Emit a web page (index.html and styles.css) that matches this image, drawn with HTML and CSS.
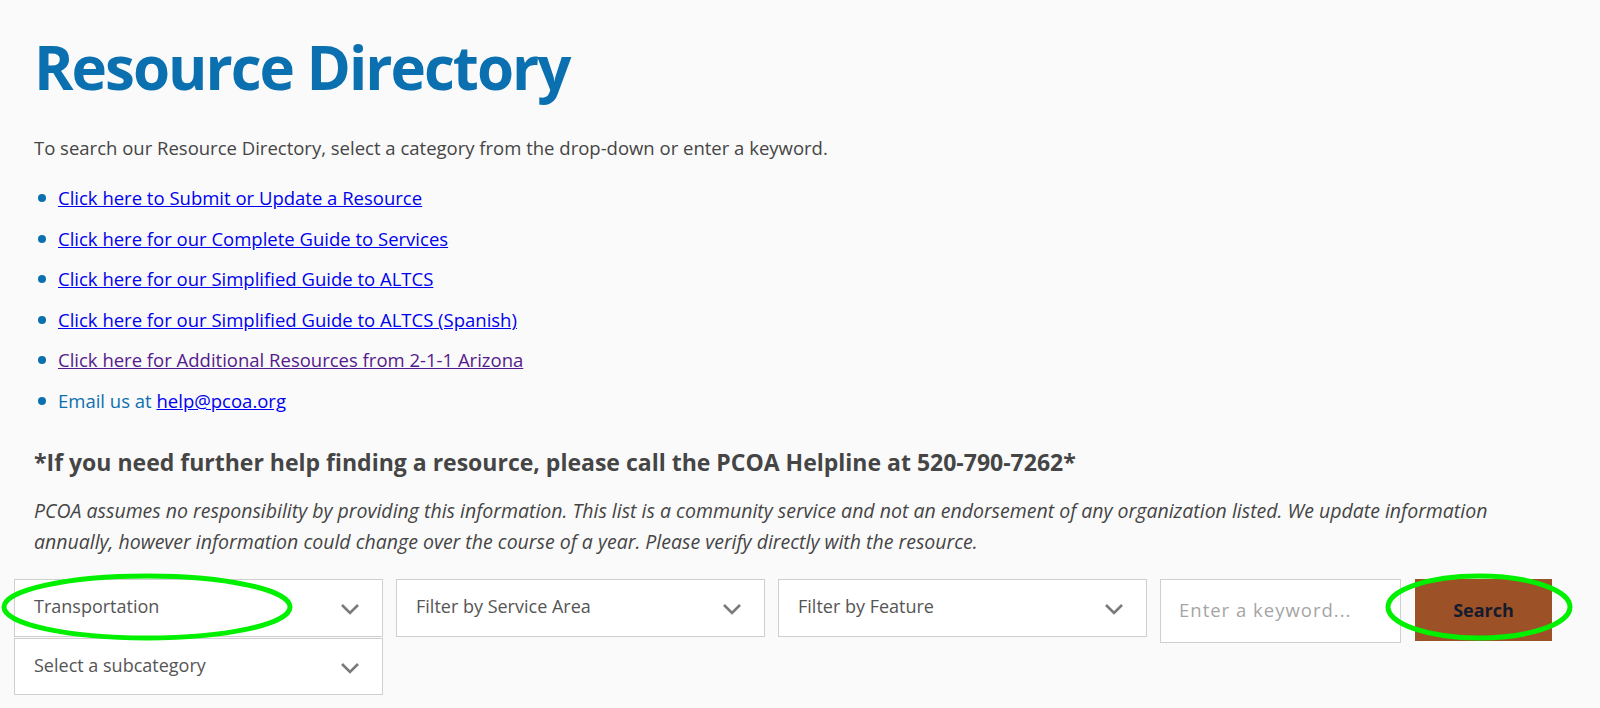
FILE: index.html
```html
<!DOCTYPE html>
<html lang="en">
<head>
<meta charset="utf-8">
<title>Resource Directory</title>
<link rel="stylesheet" href="styles.css">
</head>
<body>
<main class="page">
  <section class="intro">
    <h1 class="title">Resource Directory</h1>
    <p class="lead">To search our Resource Directory, select a category from the drop-down or enter a keyword.</p>
    <ul class="links">
      <li><a href="#" class="link">Click here to Submit or Update a Resource</a></li>
      <li><a href="#" class="link">Click here for our Complete Guide to Services</a></li>
      <li><a href="#" class="link">Click here for our Simplified Guide to ALTCS</a></li>
      <li><a href="#" class="link">Click here for our Simplified Guide to ALTCS (Spanish)</a></li>
      <li><a href="#" class="link visited">Click here for Additional Resources from 2-1-1 Arizona</a></li>
      <li class="email">Email us at <a href="#" class="link">help@pcoa.org</a></li>
    </ul>
    <h3 class="helpline">*If you need further help finding a resource, please call the PCOA Helpline at 520-790-7262*</h3>
    <p class="disclaimer">PCOA assumes no responsibility by providing this information. This list is a community service and not an endorsement of any organization listed. We update information annually, however information could change over the course of a year. Please verify directly with the resource.</p>
  </section>
  <form class="filters">
    <div class="col-cat">
      <div class="select select-top"><span>Transportation</span><svg class="chev" width="20" height="12" viewBox="0 0 20 12"><polyline points="2,2 10,10 18,2" fill="none" stroke="#7a7a7a" stroke-width="2.6"/></svg></div>
      <div class="select select-sub"><span>Select a subcategory</span><svg class="chev" width="20" height="12" viewBox="0 0 20 12"><polyline points="2,2 10,10 18,2" fill="none" stroke="#7a7a7a" stroke-width="2.6"/></svg></div>
    </div>
    <div class="select"><span>Filter by Service Area</span><svg class="chev" width="20" height="12" viewBox="0 0 20 12"><polyline points="2,2 10,10 18,2" fill="none" stroke="#7a7a7a" stroke-width="2.6"/></svg></div>
    <div class="select"><span>Filter by Feature</span><svg class="chev" width="20" height="12" viewBox="0 0 20 12"><polyline points="2,2 10,10 18,2" fill="none" stroke="#7a7a7a" stroke-width="2.6"/></svg></div>
    <div class="keyword"><span>Enter a keyword...</span></div>
    <div class="search-btn">Search</div>
    <svg class="mark mark-1" width="292" height="68" viewBox="0 0 292 68"><ellipse cx="146" cy="34" rx="143" ry="31" fill="none" stroke="#00f000" stroke-width="5"/></svg>
    <svg class="mark mark-2" width="188" height="68" viewBox="0 0 188 68"><ellipse cx="94" cy="34" rx="91" ry="31" fill="none" stroke="#00f000" stroke-width="5"/></svg>
  </form>
</main>
</body>
</html>
```
FILE: styles.css
```css
html, body {
  margin: 0;
  padding: 0;
  background: #fafafa;
}
body {
  font-family: "Open Sans", "Noto Sans", sans-serif;
  color: #454545;
  overflow: hidden;
}
.page {
  padding-top: 31px;
}
.intro {
  padding: 0 34px;
}
.title {
  margin: 0;
  font-family: "Open Sans", sans-serif;
  font-weight: 700;
  font-size: 60px;
  line-height: 72px;
  letter-spacing: -2px;
  color: #0a70b0;
}
.lead {
  margin: 32px 0 0;
  font-size: 18.5px;
  line-height: 26px;
}
.links {
  margin: 24px 0 0;
  padding: 0 0 0 24px;
  list-style: none;
}
.links li {
  position: relative;
  font-size: 18.5px;
  line-height: 26px;
  margin-bottom: 14.6px;
}
.links li::before {
  content: "";
  position: absolute;
  left: -20px;
  top: 9px;
  width: 8px;
  height: 8px;
  border-radius: 50%;
  background: #0a70b0;
}
.link {
  color: #0000ee;
  text-decoration: underline;
}
.link.visited {
  color: #551a8b;
}
.email {
  color: #0a70b0;
}
.helpline {
  margin: 33px 0 0;
  font-size: 23px;
  line-height: 30px;
  font-weight: 700;
  color: #454545;
}
.disclaimer {
  margin: 18px 0 0;
  max-width: 1500px;
  font-size: 19.5px;
  line-height: 31px;
  font-style: italic;
}
.filters {
  position: relative;
  display: flex;
  align-items: flex-start;
  gap: 13px;
  margin: 22px 0 0 14px;
}
.col-cat {
  display: flex;
  flex-direction: column;
}
.select {
  box-sizing: border-box;
  width: 369px;
  height: 58px;
  background: #fff;
  border: 1px solid #cfcfcf;
  display: flex;
  justify-content: space-between;
  align-items: flex-start;
  padding: 13px 22px 0 19px;
  font-size: 18px;
  line-height: 26px;
  color: #555;
}
.select .chev {
  margin-top: 10px;
}
.select-sub {
  margin-top: 1px;
  height: 57px;
}
.keyword {
  box-sizing: border-box;
  width: 241px;
  height: 64px;
  background: #fff;
  border: 1px solid #cfcfcf;
  padding: 17px 18px 0;
  font-size: 18.5px;
  line-height: 26px;
  letter-spacing: 1px;
  color: #a5a5a5;
  white-space: nowrap;
}
.search-btn {
  box-sizing: border-box;
  width: 137px;
  height: 62px;
  background: #9c5226;
  color: #151b2e;
  font-weight: 700;
  font-size: 18px;
  line-height: 26px;
  text-align: center;
  padding-top: 18px;
  margin-left: 1px;
}
.mark {
  position: absolute;
}
.mark-1 {
  left: -13px;
  top: -6px;
}
.mark-2 {
  left: 1371px;
  top: -6px;
}
```
